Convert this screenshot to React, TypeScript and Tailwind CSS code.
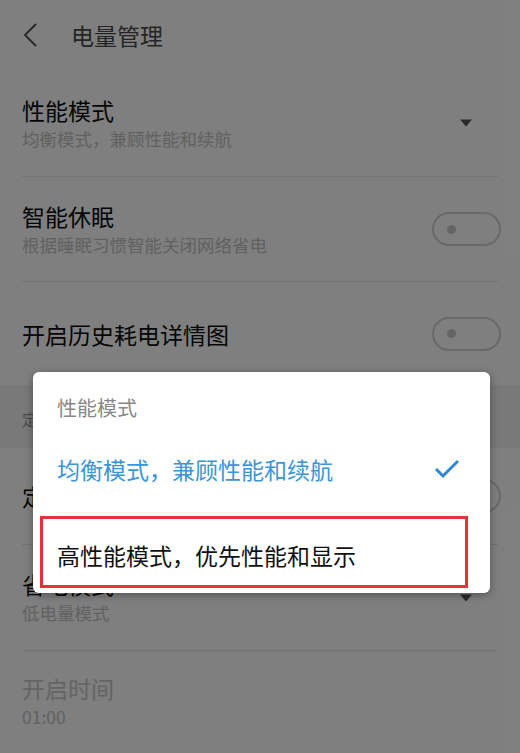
const font = { fontFamily: '"Noto Sans CJK SC", "Noto Sans", sans-serif' }

function Toggle() {
  return (
    <div className="w-[69px] h-[34px] rounded-full border-2 border-[#d2d2d2] flex items-center pl-[13px] shrink-0">
      <div className="w-[9px] h-[9px] rounded-full bg-[#cacaca]" />
    </div>
  )
}

function Caret() {
  return (
    <svg width="14" height="8" viewBox="0 0 14 8" className="shrink-0 mr-[28px]">
      <path d="M1 0.5 L13 0.5 L7 7.5 Z" fill="#555555" />
    </svg>
  )
}

function Divider() {
  return <div className="mx-[22px] h-px bg-[#e6e6e6]" />
}

function Row({
  title,
  sub,
  right,
  height,
  disabled,
}: {
  title: string
  sub?: string
  right?: React.ReactNode
  height: string
  disabled?: boolean
}) {
  return (
    <div className={`flex items-center justify-between pl-[22px] pr-[19px] ${height}`}>
      <div className="flex flex-col gap-[1px]">
        <span
          className={`text-[23px] leading-[30px] ${disabled ? 'text-[#c8c8c8]' : 'text-[#0a0a0a]'}`}
        >
          {title}
        </span>
        {sub && (
          <span className="text-[17.5px] leading-[26px] text-[#c2c2c2]">{sub}</span>
        )}
      </div>
      {right}
    </div>
  )
}

export default function App() {
  return (
    <div className="relative w-[520px] h-[753px] overflow-hidden bg-white" style={font}>
      {/* settings page */}
      <header className="h-[70px] flex items-center">
        <svg width="16" height="26" viewBox="0 0 16 26" className="ml-[22px]">
          <path d="M14 2 L3 13 L14 24" fill="none" stroke="#555555" strokeWidth="2" />
        </svg>
        <h1 className="ml-[33px] text-[23px] leading-[30px] text-[#4a4a4a]">电量管理</h1>
      </header>

      <Row title="性能模式" sub="均衡模式，兼顾性能和续航" height="h-[106px]" right={<Caret />} />
      <Divider />
      <Row title="智能休眠" sub="根据睡眠习惯智能关闭网络省电" height="h-[104px]" right={<Toggle />} />
      <Divider />
      <Row title="开启历史耗电详情图" height="h-[103px]" right={<Toggle />} />

      <div className="h-[63px] bg-[#f2f2f2] flex items-center pl-[22px] pt-[4px]">
        <span className="text-[16px] text-[#999999]">定时省电</span>
      </div>

      <Row title="定时开关省电模式" height="h-[96px]" right={<Toggle />} />
      <Divider />
      <Row title="省电模式" sub="低电量模式" height="h-[105px]" right={<Caret />} />
      <Divider />
      <Row title="开启时间" sub="01:00" height="h-[100px]" disabled />

      {/* dim layer */}
      <div className="absolute inset-0 bg-black/50" />

      {/* picker dialog */}
      <div className="absolute left-[33px] top-[372px] w-[457px] h-[221px] rounded-[6px] bg-white shadow-[0_2px_8px_rgba(0,0,0,0.35)]">
        <div className="pl-[24px] pt-[24px] text-[20px] leading-[24px] text-[#888888]">性能模式</div>
        <div className="h-[92px] pt-[6px] pl-[24px] pr-[30px] flex items-center justify-between">
          <span className="text-[23px] leading-[30px] text-[#3896dc]">均衡模式，兼顾性能和续航</span>
          <svg width="26" height="20" viewBox="0 0 26 20">
            <path d="M2 10 L9 17 L24 2" fill="none" stroke="#2f88d2" strokeWidth="3" />
          </svg>
        </div>
        <div className="mx-[24px] h-px bg-[#f0f0f0]" />
        <div className="h-[80px] pt-[4px] pl-[24px] flex items-center">
          <span className="text-[23px] leading-[30px] text-[#111111]">高性能模式，优先性能和显示</span>
        </div>
        <div className="absolute left-[7px] top-[144px] w-[428px] h-[72px] border-[3px] border-[#e6333b]" />
      </div>
    </div>
  )
}
